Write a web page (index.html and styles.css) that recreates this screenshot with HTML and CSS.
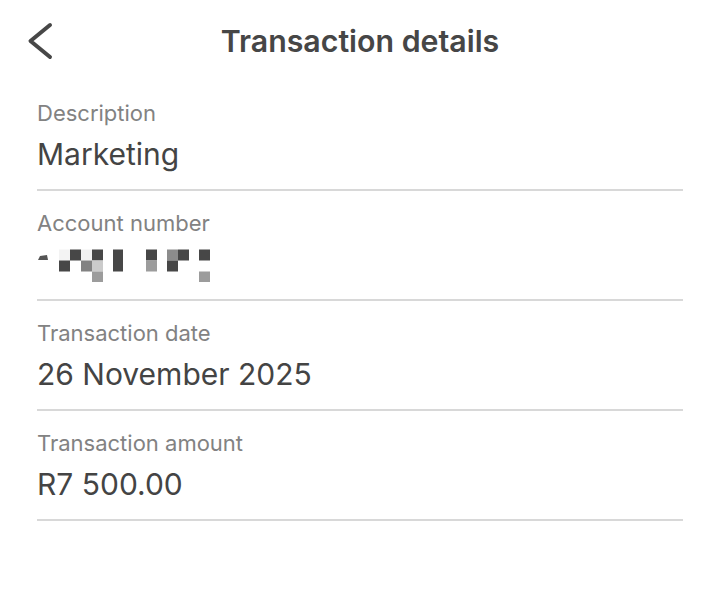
FILE: index.html
```html
<!DOCTYPE html>
<html lang="en">
<head>
<meta charset="utf-8">
<title>Transaction details</title>
<link rel="stylesheet" href="styles.css">
</head>
<body>
<div class="screen">
  <header class="topbar">
    <button class="back" aria-label="Back">
      <svg width="30" height="40" viewBox="0 0 30 40" aria-hidden="true">
        <path d="M26 4 L6.5 20 L26 36" fill="none" stroke="#474747" stroke-width="4" stroke-linecap="round" stroke-linejoin="round"/>
      </svg>
    </button>
    <h1 class="title">Transaction details</h1>
    <span class="spacer"></span>
  </header>
  <main class="details">
    <div class="row">
      <div class="label">Description</div>
      <div class="value">Marketing</div>
    </div>
    <div class="row">
      <div class="label">Account number</div>
      <div class="value">
        <svg class="masked" width="180" height="36" viewBox="0 0 180 36" aria-label="Hidden account number">
          <path d="M1 14 L3 10 L10 9 L11 14 Z" fill="#555"/>
          <rect x="22" y="3.5" width="11" height="11" fill="#f3f3f3"/>
          <rect x="44" y="3.5" width="11" height="11" fill="#f1f1f1"/>
          <rect x="33" y="3.5" width="11" height="11" fill="#474747"/>
          <rect x="55" y="3.5" width="11" height="11" fill="#474747"/>
          <rect x="76" y="3.5" width="10" height="22" fill="#474747"/>
          <rect x="109" y="3.5" width="11" height="11" fill="#474747"/>
          <rect x="130" y="3.5" width="11" height="11" fill="#8c8c8c"/>
          <rect x="141" y="3.5" width="11" height="11" fill="#474747"/>
          <rect x="162" y="3.5" width="11" height="11" fill="#474747"/>
          <rect x="22" y="14.5" width="11" height="11" fill="#474747"/>
          <rect x="44" y="14.5" width="11" height="11" fill="#828282"/>
          <rect x="55" y="14.5" width="11" height="11" fill="#cbcbcb"/>
          <rect x="109" y="14.5" width="11" height="11" fill="#9c9c9c"/>
          <rect x="130" y="14.5" width="11" height="11" fill="#474747"/>
          <rect x="55" y="25.5" width="11" height="11" fill="#9c9c9c"/>
          <rect x="162" y="25.5" width="11" height="11" fill="#9c9c9c"/>
        </svg>
      </div>
    </div>
    <div class="row">
      <div class="label">Transaction date</div>
      <div class="value">26 November 2025</div>
    </div>
    <div class="row">
      <div class="label">Transaction amount</div>
      <div class="value">R7 500.00</div>
    </div>
  </main>
</div>
</body>
</html>
```

FILE: styles.css
```css
* {
  box-sizing: border-box;
}

html, body {
  margin: 0;
  padding: 0;
  background: #ffffff;
}

body {
  font-family: Inter, "Noto Sans", "Liberation Sans", sans-serif;
  color: #454545;
}

.screen {
  width: 720px;
  min-height: 589px;
}

.topbar {
  height: 81px;
  display: grid;
  grid-template-columns: 1fr auto 1fr;
  align-items: center;
  padding: 0 24px;
}

.back {
  justify-self: start;
  display: flex;
  padding: 0;
  margin: 0;
  border: 0;
  background: none;
  cursor: pointer;
}

.back svg {
  display: block;
}

.title {
  margin: 0;
  font-size: 30.3px;
  line-height: 36px;
  font-weight: 600;
  color: #464646;
}

.spacer {
  display: block;
}

.details {
  padding: 0 37px;
}

.row {
  padding: 19px 0 17px;
  border-bottom: 2px solid #d8d8d8;
}

.label {
  font-size: 22px;
  line-height: 26px;
  color: #828282;
}

.value {
  margin-top: 10px;
  font-size: 30px;
  line-height: 36px;
  height: 36px;
  color: #444444;
}

.masked {
  display: block;
}
```
